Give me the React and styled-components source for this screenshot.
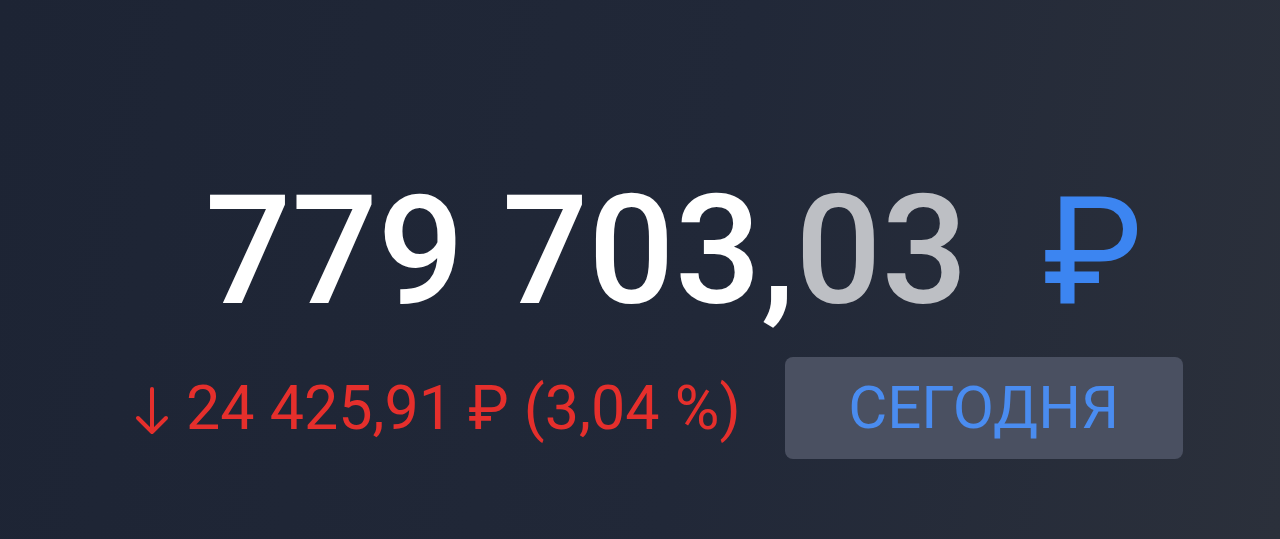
import * as React from "react";
import styled, { createGlobalStyle } from "styled-components";

const GlobalStyle = createGlobalStyle`
  html, body {
    margin: 0;
    padding: 0;
  }
  body {
    font-family: Roboto, "Liberation Sans", sans-serif;
    background: #1e2535;
  }
`;

const Balance = () => {
  return (
    <Screen>
      <GlobalStyle />
      <AmountRow>
        <Whole>779 703,</Whole>
        <Cents>03</Cents>
        <Currency>₽</Currency>
      </AmountRow>
      <ChangeRow>
        <Change>
          <DownArrow viewBox="0 0 34 50" aria-hidden="true">
            <path d="M17 3 V46 M3 32 L17 46 L31 32" />
          </DownArrow>
          <span>24 425,91 ₽ (3,04 %)</span>
        </Change>
        <PeriodButton>СЕГОДНЯ</PeriodButton>
      </ChangeRow>
    </Screen>
  );
};

const Screen = styled.div`
  min-height: 539px;
  box-sizing: border-box;
  padding: 175px 0 0 135px;
  display: flex;
  flex-direction: column;
  align-items: flex-start;
  background: linear-gradient(100deg, #1d2434 0%, #212838 55%, #2b303b 100%);
`;

const AmountRow = styled.div`
  display: flex;
  align-items: baseline;
  margin-left: 70px;
  font-size: 152px;
  line-height: 1;
  font-weight: 500;
`;

const Whole = styled.span`
  color: #ffffff;
`;

const Cents = styled.span`
  color: #bdbfc4;
`;

const Currency = styled.span`
  color: #3c85f1;
  font-weight: 400;
  font-size: 150px;
  margin-left: 75px;
`;

const ChangeRow = styled.div`
  display: flex;
  align-items: center;
  gap: 44px;
  margin-top: 30px;
`;

const Change = styled.div`
  display: flex;
  align-items: center;
  gap: 17px;
  color: #e52f2c;
  font-size: 61px;
  line-height: 1;
`;

const DownArrow = styled.svg`
  width: 34px;
  height: 50px;
  fill: none;
  stroke: #e52f2c;
  stroke-width: 4;
  stroke-linecap: round;
  stroke-linejoin: round;
  margin-top: 6px;
`;

const PeriodButton = styled.button`
  width: 398px;
  height: 102px;
  border: none;
  border-radius: 8px;
  background: #4a5061;
  color: #4a8cf0;
  font-family: Roboto, "Liberation Sans", sans-serif;
  font-size: 60px;
  line-height: 1;
  padding: 0;
  cursor: pointer;
`;

export default Balance;
